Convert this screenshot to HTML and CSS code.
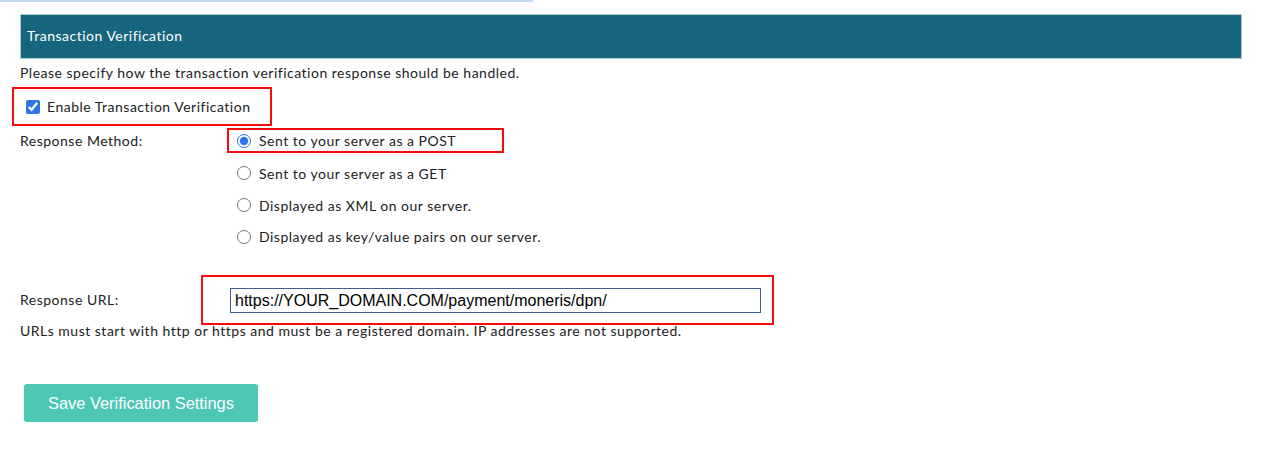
FILE: index.html
```html
<!DOCTYPE html>
<html>
<head>
<meta charset="utf-8">
<link rel="stylesheet" href="styles.css">
</head>
<body>
<div class="topline"></div>
<div class="panel">
  <div class="header">Transaction Verification</div>
  <p class="intro">Please specify how the transaction verification response should be handled.</p>
  <div class="mark mark-check">
    <label class="check"><input type="checkbox" checked><span>Enable Transaction Verification</span></label>
  </div>
  <div class="row method">
    <div class="label">Response Method:</div>
    <div class="options">
      <div class="mark mark-radio">
        <label class="radio"><input type="radio" name="m" checked><span>Sent to your server as a POST</span></label>
      </div>
      <label class="radio"><input type="radio" name="m"><span>Sent to your server as a GET</span></label>
      <label class="radio"><input type="radio" name="m"><span>Displayed as XML on our server.</span></label>
      <label class="radio"><input type="radio" name="m"><span>Displayed as key/value pairs on our server.</span></label>
    </div>
  </div>
  <div class="row url">
    <div class="label url-label">Response URL:</div>
    <div class="mark mark-url">
      <input class="url-input" type="text" value="https://YOUR_DOMAIN.COM/payment/moneris/dpn/">
    </div>
  </div>
  <p class="note">URLs must start with http or https and must be a registered domain. IP addresses are not supported.</p>
  <button class="save">Save Verification Settings</button>
</div>
</body>
</html>
```

FILE: styles.css
```css
* { box-sizing: border-box; }
body {
  margin: 0;
  background: #fff;
  font-family: Lato, "Noto Sans", sans-serif;
  font-size: 14px;
  letter-spacing: 0.5px;
  color: #222;
}
.topline {
  width: 533px;
  height: 2px;
  background: #c3dafa;
}
.panel {
  padding-left: 20px;
  padding-top: 12px;
}
.header {
  width: 1222px;
  height: 45px;
  background: #17657d;
  border: 1px solid #a9ccd6;
  color: #fff;
  font-size: 14px;
  line-height: 42px;
  padding-left: 6px;
}
.intro {
  margin: 4px 0 0;
  line-height: 20px;
}
.mark { border: 2px solid #f20c0c; }
.mark-check {
  margin: 4px 0 0 -8px;
  width: 260px;
  height: 39px;
  padding-left: 12px;
  display: flex;
  align-items: center;
}
.check, .radio {
  display: flex;
  align-items: center;
}
.check input {
  margin: 0 7px 0 0;
  width: 14px;
  height: 14px;
  accent-color: #2f74e8;
}
.row { display: flex; }
.method { margin-top: 2px; }
.label {
  width: 207px;
  line-height: 26px;
}
.options {
  display: flex;
  flex-direction: column;
}
.mark-radio {
  width: 277px;
  height: 25px;
  padding-left: 8px;
  display: flex;
  align-items: center;
}
.radio input {
  margin: 0 8px 0 0;
  width: 14px;
  height: 14px;
  accent-color: #2f74e8;
}
.options > .radio {
  height: 32px;
  padding-left: 10px;
}
.options > .radio:first-of-type { margin-top: 4px; }
.options > .radio:nth-of-type(3) { height: 31px; }
.url {
  margin-top: 23px;
  align-items: center;
}
.url .label { line-height: 22px; }
.url-label { width: 181px; }
.mark-url {
  width: 573px;
  height: 50px;
  padding: 11px 12px 0 27px;
}
.url-input {
  width: 531px;
  height: 25px;
  border: 1px solid #3f5f8f;
  border-radius: 0;
  font-family: "Liberation Sans", Arial, sans-serif;
  font-size: 16px;
  letter-spacing: 0;
  padding: 0 4px;
  color: #000;
  outline: none;
}
.note {
  margin: 0;
  line-height: 12px;
}
.save {
  display: block;
  margin: 47px 0 0 4px;
  width: 234px;
  height: 38px;
  background: #4dc6b4;
  border: none;
  border-radius: 3px;
  color: #fff;
  font-family: "Liberation Sans", Arial, sans-serif;
  font-size: 16.4px;
  letter-spacing: 0;
  padding: 0;
}
```
